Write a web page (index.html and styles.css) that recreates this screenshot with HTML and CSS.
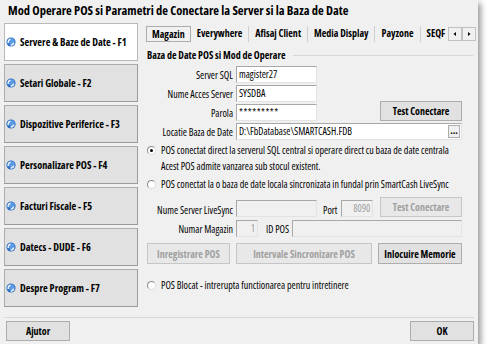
FILE: index.html
```html
<!DOCTYPE html>
<html lang="ro">
<head>
    <meta charset="UTF-8">
    <title>Mod Operare POS</title>
    <link rel="stylesheet" href="styles.css">
</head>
<body>
    <div class="window">
        <!-- Title -->
        <div class="title">Mod Operare POS si Parametri de Conectare la Server si la Baza de Date</div>

        <div class="main">
            <!-- Left menu -->
            <div class="nav">
                <div class="nav-btn active"><svg class="globe" viewBox="0 0 10 10"><circle cx="5" cy="5" r="4.6" fill="#2f6fc4"/><circle cx="5.6" cy="4.2" r="3" fill="#5b9be6"/><path d="M1.6 6.2 A3.6 3.6 0 0 1 4.4 1.5 L4.6 3 A2.2 2.2 0 0 0 3 6 Z" fill="#fff"/><path d="M4.5 8.6 A3.6 3.6 0 0 0 8.5 5.8 L7 5.5 A2.2 2.2 0 0 1 4.6 7.2 Z" fill="#e8f0fb"/></svg>Servere &amp; Baze de Date - F1</div>
                <div class="nav-btn"><svg class="globe" viewBox="0 0 10 10"><circle cx="5" cy="5" r="4.6" fill="#2f6fc4"/><circle cx="5.6" cy="4.2" r="3" fill="#5b9be6"/><path d="M1.6 6.2 A3.6 3.6 0 0 1 4.4 1.5 L4.6 3 A2.2 2.2 0 0 0 3 6 Z" fill="#fff"/><path d="M4.5 8.6 A3.6 3.6 0 0 0 8.5 5.8 L7 5.5 A2.2 2.2 0 0 1 4.6 7.2 Z" fill="#e8f0fb"/></svg>Setari Globale - F2</div>
                <div class="nav-btn"><svg class="globe" viewBox="0 0 10 10"><circle cx="5" cy="5" r="4.6" fill="#2f6fc4"/><circle cx="5.6" cy="4.2" r="3" fill="#5b9be6"/><path d="M1.6 6.2 A3.6 3.6 0 0 1 4.4 1.5 L4.6 3 A2.2 2.2 0 0 0 3 6 Z" fill="#fff"/><path d="M4.5 8.6 A3.6 3.6 0 0 0 8.5 5.8 L7 5.5 A2.2 2.2 0 0 1 4.6 7.2 Z" fill="#e8f0fb"/></svg>Dispozitive Periferice - F3</div>
                <div class="nav-btn"><svg class="globe" viewBox="0 0 10 10"><circle cx="5" cy="5" r="4.6" fill="#2f6fc4"/><circle cx="5.6" cy="4.2" r="3" fill="#5b9be6"/><path d="M1.6 6.2 A3.6 3.6 0 0 1 4.4 1.5 L4.6 3 A2.2 2.2 0 0 0 3 6 Z" fill="#fff"/><path d="M4.5 8.6 A3.6 3.6 0 0 0 8.5 5.8 L7 5.5 A2.2 2.2 0 0 1 4.6 7.2 Z" fill="#e8f0fb"/></svg>Personalizare POS - F4</div>
                <div class="nav-btn"><svg class="globe" viewBox="0 0 10 10"><circle cx="5" cy="5" r="4.6" fill="#2f6fc4"/><circle cx="5.6" cy="4.2" r="3" fill="#5b9be6"/><path d="M1.6 6.2 A3.6 3.6 0 0 1 4.4 1.5 L4.6 3 A2.2 2.2 0 0 0 3 6 Z" fill="#fff"/><path d="M4.5 8.6 A3.6 3.6 0 0 0 8.5 5.8 L7 5.5 A2.2 2.2 0 0 1 4.6 7.2 Z" fill="#e8f0fb"/></svg>Facturi Fiscale - F5</div>
                <div class="nav-btn"><svg class="globe" viewBox="0 0 10 10"><circle cx="5" cy="5" r="4.6" fill="#2f6fc4"/><circle cx="5.6" cy="4.2" r="3" fill="#5b9be6"/><path d="M1.6 6.2 A3.6 3.6 0 0 1 4.4 1.5 L4.6 3 A2.2 2.2 0 0 0 3 6 Z" fill="#fff"/><path d="M4.5 8.6 A3.6 3.6 0 0 0 8.5 5.8 L7 5.5 A2.2 2.2 0 0 1 4.6 7.2 Z" fill="#e8f0fb"/></svg>Datecs - DUDE - F6</div>
                <div class="nav-btn"><svg class="globe" viewBox="0 0 10 10"><circle cx="5" cy="5" r="4.6" fill="#2f6fc4"/><circle cx="5.6" cy="4.2" r="3" fill="#5b9be6"/><path d="M1.6 6.2 A3.6 3.6 0 0 1 4.4 1.5 L4.6 3 A2.2 2.2 0 0 0 3 6 Z" fill="#fff"/><path d="M4.5 8.6 A3.6 3.6 0 0 0 8.5 5.8 L7 5.5 A2.2 2.2 0 0 1 4.6 7.2 Z" fill="#e8f0fb"/></svg>Despre Program - F7</div>
            </div>

            <!-- Tabs -->
            <div class="tabs">
                <div class="tab-row">
                    <div class="tab active">Magazin</div>
                    <div class="tab">Everywhere</div>
                    <div class="tab">Afisaj Client</div>
                    <div class="tab">Media Display</div>
                    <div class="tab">Payzone</div>
                    <div class="tab cut">SEQF</div>
                    <div class="scroll">
                        <span class="arrow"><svg viewBox="0 0 6 6"><path d="M4 1 L1.5 3 L4 5 Z" fill="#000"/></svg></span>
                        <span class="arrow"><svg viewBox="0 0 6 6"><path d="M2 1 L4.5 3 L2 5 Z" fill="#000"/></svg></span>
                    </div>
                </div>

                <div class="pane">
                    <div class="group-title"><span>Baza de Date POS si Mod de Operare</span></div>

                    <div class="row">
                        <div class="label">Server SQL</div>
                        <div class="field w-short">magister27</div>
                    </div>
                    <div class="row">
                        <div class="label">Nume Acces Server</div>
                        <div class="field w-short">SYSDBA</div>
                    </div>
                    <div class="row">
                        <div class="label">Parola</div>
                        <div class="field w-short pass">*********</div>
                        <div class="btn bold push test">Test Conectare</div>
                    </div>
                    <div class="row">
                        <div class="label">Locatie Baza de Date</div>
                        <div class="field grow">D:\FbDatabase\SMARTCASH.FDB<span class="dots">...</span></div>
                    </div>

                    <div class="radio first">
                        <span class="dot checked"></span>
                        <div>POS conectat direct la serverul SQL central si operare direct cu baza de date centrala<br>Acest POS admite vanzarea sub stocul existent.</div>
                    </div>
                    <div class="radio second">
                        <span class="dot"></span>
                        <div>POS conectat la o baza de date locala sincronizata in fundal prin SmartCash LiveSync</div>
                    </div>

                    <div class="row sync">
                        <div class="label">Nume Server LiveSync</div>
                        <div class="field disabled w-sync"></div>
                        <div class="small-label port">Port</div>
                        <div class="field disabled w-port num">8090</div>
                        <div class="btn bold disabled push test">Test Conectare</div>
                    </div>
                    <div class="row store">
                        <div class="label">Numar Magazin</div>
                        <div class="field disabled w-store num">1</div>
                        <div class="small-label idpos">ID POS</div>
                        <div class="field disabled grow"></div>
                    </div>

                    <div class="actions">
                        <div class="btn bold disabled w-reg">Inregistrare POS</div>
                        <div class="btn bold disabled w-int">Intervale Sincronizare POS</div>
                        <div class="btn bold w-mem">Inlocuire Memorie</div>
                    </div>

                    <div class="radio third">
                        <span class="dot"></span>
                        <div>POS Blocat - intrerupta functionarea pentru intretinere</div>
                    </div>
                </div>
            </div>
        </div>

        <!-- Bottom buttons -->
        <div class="footer">
            <div class="btn bold foot-btn">Ajutor</div>
            <div class="btn bold foot-btn">OK</div>
        </div>
    </div>
</body>
</html>
```
FILE: styles.css
```css
/* Basic reset */
* {
    margin: 0;
    padding: 0;
    box-sizing: border-box;
}

body {
    background: #ffffff;
    font-family: "Open Sans", "Liberation Sans", sans-serif;
    font-stretch: 80%;
    font-size: 10px;
    color: #000;
}

/* Dialog window */
.window {
    width: 478px;
    height: 344px;
    background: #f0f0f0;
    box-shadow: 3px 3px 6px rgba(0, 0, 0, 0.4);
    display: flex;
    flex-direction: column;
}

.title {
    height: 23px;
    padding: 3px 0 0 8px;
    font-size: 12.5px;
    font-weight: bold;
    line-height: 16px;
    white-space: nowrap;
}

.main {
    display: flex;
    height: 294px;
}

/* Left menu */
.nav {
    width: 134px;
    margin-left: 4px;
    display: flex;
    flex-direction: column;
    gap: 3px;
}

.nav-btn {
    height: 38px;
    display: flex;
    align-items: center;
    gap: 4px;
    padding-left: 1px;
    background: #e1e1e1;
    border: 1px solid #adadad;
    border-right-color: #9a9a9a;
    border-bottom-color: #9a9a9a;
    font-weight: bold;
    font-size: 10.3px;
    white-space: nowrap;
}

.nav-btn.active {
    background: #ffffff;
    border-color: #b9b9b9;
}

.globe {
    width: 10px;
    height: 10px;
    flex: none;
}

/* Tabs */
.tabs {
    width: 332px;
    margin-left: 6px;
}

.tab-row {
    height: 20px;
    display: flex;
    align-items: flex-end;
    padding-left: 2px;
    font-weight: bold;
}

.tab {
    height: 16px;
    line-height: 15px;
    padding: 0 6px;
    border-right: 1px solid #cfcfcf;
    white-space: nowrap;
    margin-bottom: 1px;
}

.tab.active {
    border: 1px solid #adadad;
    background: #f0f0f0;
    padding: 0 5px;
}

.tab.cut {
    flex: 1;
    overflow: hidden;
    border-right: none;
    padding-right: 0;
}

.scroll {
    display: flex;
    margin-bottom: 2px;
}

.arrow {
    width: 14px;
    height: 14px;
    background: #f0f0f0;
    border: 1px solid #c2c2c2;
    display: flex;
    align-items: center;
    justify-content: center;
}

.arrow svg {
    width: 6px;
    height: 6px;
}

.pane {
    padding: 5px 14px 0 3px;
}

.group-title {
    height: 14px;
    display: flex;
    align-items: center;
    gap: 8px;
    margin-right: -11px;
    margin-bottom: 4px;
    font-weight: bold;
    white-space: nowrap;
}

.group-title::after {
    content: "";
    flex: 1;
    border-top: 1px solid #d6d6d6;
}

/* Form rows */
.row {
    display: flex;
    align-items: center;
    height: 17px;
    margin-bottom: 2px;
    white-space: nowrap;
}

.label {
    width: 86px;
    text-align: right;
    margin-right: 3px;
}

.field {
    height: 17px;
    line-height: 15px;
    padding: 0 2px;
    background: #ffffff;
    border: 1px solid #a8a8a8;
    border-right-color: #e3e3e3;
    border-bottom-color: #e3e3e3;
    position: relative;
    white-space: nowrap;
}

.field.disabled {
    background: #f0f0f0;
    color: #a0a0a0;
}

.field.num {
    text-align: right;
}

.w-short { width: 81px; }
.w-sync { width: 81px; }
.w-port { width: 32px; }
.w-store { width: 22px; }
.grow { flex: 1; }

.pass {
    letter-spacing: 0.5px;
}

.dots {
    position: absolute;
    right: 1px;
    top: 1px;
    width: 12px;
    height: 13px;
    line-height: 8px;
    text-align: center;
    background: #f0f0f0;
    border: 1px solid #adadad;
    font-weight: bold;
}

.small-label {
    margin-right: 4px;
}

.port { margin-left: 6px; }
.idpos { margin-left: 8px; margin-right: 3px; }

/* Buttons */
.btn {
    height: 20px;
    display: flex;
    align-items: center;
    justify-content: center;
    background: #e1e1e1;
    border: 1px solid #adadad;
    white-space: nowrap;
}

.btn.bold { font-weight: bold; }

.btn.disabled {
    color: #a0a0a0;
    background: #e8e8e8;
    border-color: #c6c6c6;
}

.push { margin-left: auto; }

.test {
    width: 82px;
    align-self: flex-end;
    margin-top: -4px;
}

/* Radio options */
.radio {
    display: flex;
    line-height: 16px;
    white-space: nowrap;
}

.radio.second { margin-top: 2px; }
.radio.third { margin-top: 13px; }

.dot {
    width: 9px;
    height: 9px;
    margin: 4px 5px 0 0;
    border-radius: 50%;
    background: #ffffff;
    border: 1px solid #8a8a8a;
    border-bottom-color: #dcdcdc;
    border-right-color: #dcdcdc;
    flex: none;
    display: flex;
    align-items: center;
    justify-content: center;
}

.dot.checked::after {
    content: "";
    width: 3px;
    height: 3px;
    border-radius: 50%;
    background: #000;
}

.row.sync {
    margin-top: 8px;
    align-items: flex-end;
}

.row.store {
    margin-top: 3px;
}

.actions {
    display: flex;
    gap: 6px;
    margin-top: 6px;
}

.actions .btn { height: 21px; }
.w-reg { width: 83px; }
.w-int { width: 136px; }
.w-mem { width: 84px; }

/* Footer */
.footer {
    margin: 0 4px;
    border-top: 1px solid #d9d9d9;
    display: flex;
    justify-content: space-between;
    padding: 3px 0 0 2px;
}

.foot-btn {
    width: 64px;
}
```
